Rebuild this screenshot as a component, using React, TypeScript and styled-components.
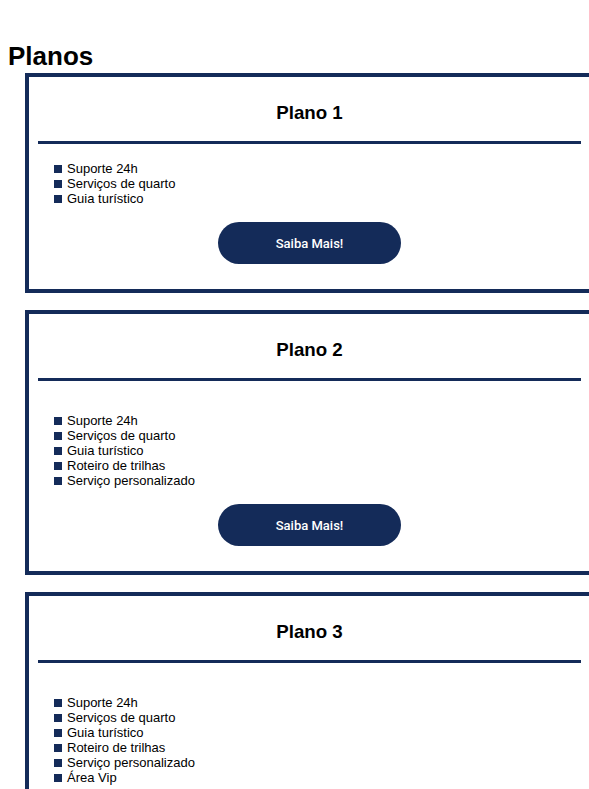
import React from "react";
import styled, { createGlobalStyle } from "styled-components";

const NAVY = "#142b59";

const GlobalStyle = createGlobalStyle`
  body {
    margin: 8px 0 8px 8px;
    background: #ffffff;
    font-family: "Liberation Sans", Arial, sans-serif;
    color: #000000;
  }
`;

const Page = styled.main`
  display: flex;
  flex-direction: column;
`;

const Heading = styled.h1`
  font-size: 26px;
  font-weight: 700;
  line-height: normal;
  margin: 33px 0 1px;
`;

const CardList = styled.div`
  display: flex;
  flex-direction: column;
  gap: 17px;
`;

const Card = styled.section`
  box-sizing: border-box;
  width: 569px;
  flex-shrink: 0;
  margin-left: 17px;
  border: 4px solid ${NAVY};
  padding: 0 9px 25px;
  display: flex;
  flex-direction: column;
`;

const Title = styled.h3`
  font-size: 18.72px;
  font-weight: 700;
  line-height: normal;
  text-align: center;
  margin: 25px 0 17px;
`;

const Rule = styled.hr`
  border: none;
  height: 3px;
  background: ${NAVY};
  margin: 0;
`;

const Features = styled.ul<{ $extra: boolean }>`
  list-style: none;
  margin: ${(p) => (p.$extra ? "32px" : "17px")} 0 0;
  padding: 0 0 0 16px;
`;

const Feature = styled.li`
  display: flex;
  align-items: center;
  gap: 5px;
  font-size: 13px;
  line-height: 15px;
  &::before {
    content: "";
    width: 8px;
    height: 8px;
    background: ${NAVY};
    flex-shrink: 0;
  }
`;

const MoreButton = styled.button`
  align-self: center;
  margin-top: 16px;
  width: 183px;
  height: 42px;
  border: none;
  border-radius: 21px;
  background: ${NAVY};
  color: #ffffff;
  font-family: Roboto, "Liberation Sans", Arial, sans-serif;
  font-size: 13px;
  font-weight: 500;
  cursor: pointer;
`;

const plans = [
  {
    name: "Plano 1",
    extra: false,
    items: ["Suporte 24h", "Serviços de quarto", "Guia turístico"],
  },
  {
    name: "Plano 2",
    extra: true,
    items: [
      "Suporte 24h",
      "Serviços de quarto",
      "Guia turístico",
      "Roteiro de trilhas",
      "Serviço personalizado",
    ],
  },
  {
    name: "Plano 3",
    extra: true,
    items: [
      "Suporte 24h",
      "Serviços de quarto",
      "Guia turístico",
      "Roteiro de trilhas",
      "Serviço personalizado",
      "Área Vip",
    ],
  },
];

export default function App() {
  return (
    <>
      <GlobalStyle />
      <Page>
        <Heading>Planos</Heading>
        <CardList>
          {plans.map((p) => (
            <Card key={p.name}>
              <Title>{p.name}</Title>
              <Rule />
              <Features $extra={p.extra}>
                {p.items.map((it) => (
                  <Feature key={it}>{it}</Feature>
                ))}
              </Features>
              <MoreButton>Saiba Mais!</MoreButton>
            </Card>
          ))}
        </CardList>
      </Page>
    </>
  );
}
